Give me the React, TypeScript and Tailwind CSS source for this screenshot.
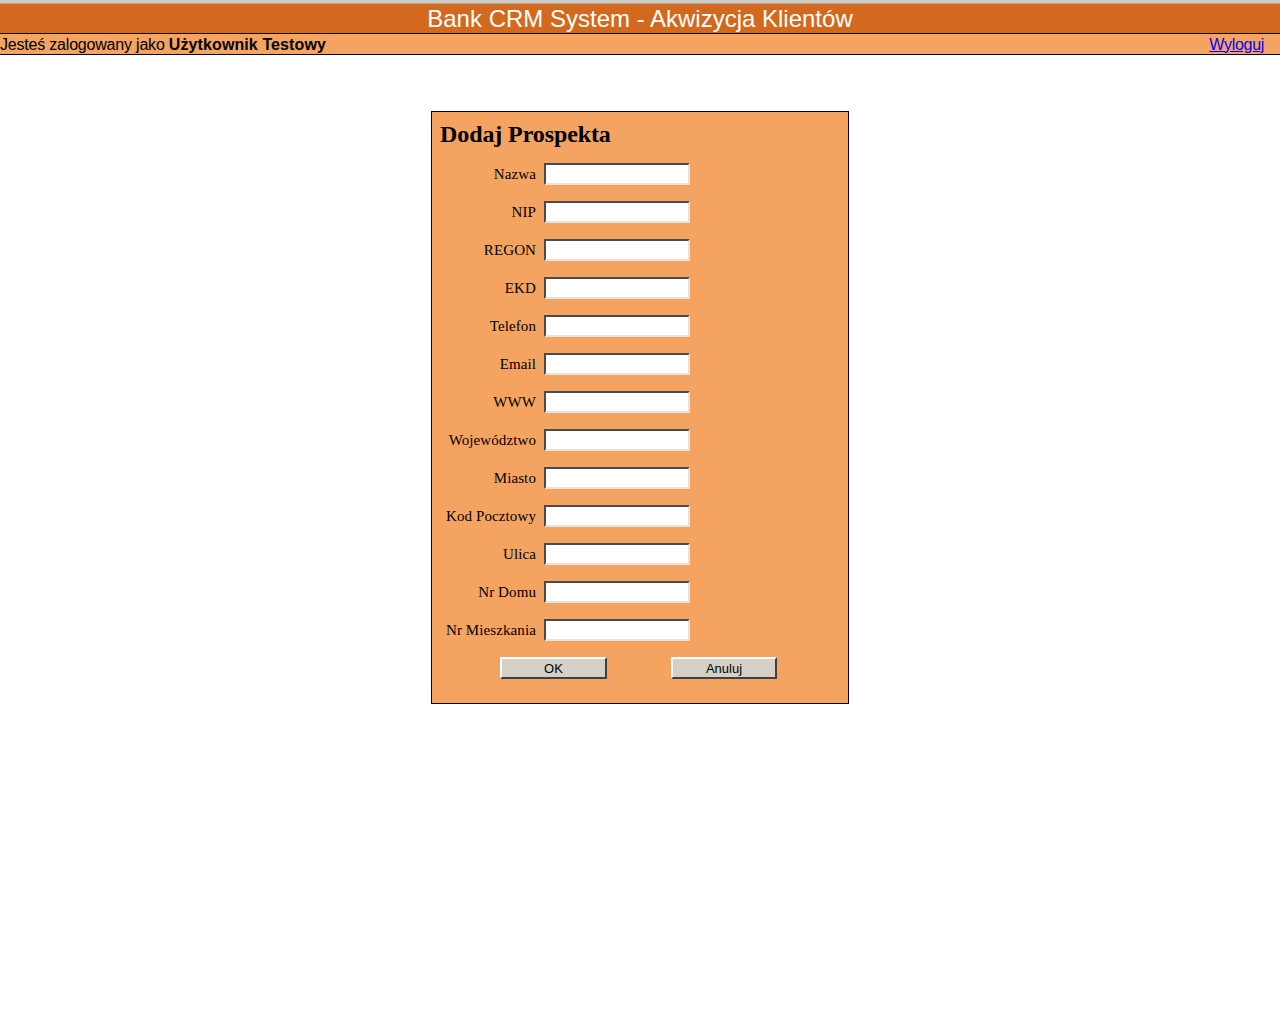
import React from "react";

const fields = [
  "Nazwa",
  "NIP",
  "REGON",
  "EKD",
  "Telefon",
  "Email",
  "WWW",
  "Województwo",
  "Miasto",
  "Kod Pocztowy",
  "Ulica",
  "Nr Domu",
  "Nr Mieszkania",
];

export default function App() {
  return (
    <div className="min-h-[1024px] bg-white" style={{ fontFamily: '"Liberation Sans", Arial, sans-serif' }}>
      <div className="h-[3px] bg-[#d0ccc4]" />
      <div className="h-px bg-[#a8a29a]" />
      <div className="h-[29px] bg-[#d2691e] flex items-center justify-center pt-[1px] text-white text-[24px] leading-none">
        Bank CRM System - Akwizycja Klientów
      </div>
      <div className="h-px bg-black" />
      <div className="h-[20px] bg-[#f4a460] flex items-center justify-between pr-4 pt-[1px] text-[16px] leading-none text-black">
        <span className="tracking-[-0.2px]">
          Jesteś zalogowany jako <b className="tracking-[0.1px]">Użytkownik Testowy</b>
        </span>
        <a href="#" className="text-[#0000ff] underline tracking-[-0.3px]">Wyloguj</a>
      </div>
      <div className="h-px bg-black" />

      <div className="flex justify-center pt-[56px]">
        <div
          className="w-[418px] h-[593px] border border-black bg-[#f4a460] pl-[8px] pt-[8px]"
          style={{ fontFamily: '"Liberation Serif", "Times New Roman", serif' }}
        >
          <h2 className="text-[24px] font-bold leading-[28px] text-black tracking-[-0.1px]">Dodaj Prospekta</h2>
          <div className="mt-[15px] flex flex-col gap-[16px]">
            {fields.map((f) => (
              <div key={f} className="flex items-center h-[22px]">
                <label className="w-[96px] text-right text-[15px] text-black whitespace-nowrap tracking-[0.1px]">{f}</label>
                <input
                  type="text"
                  className="ml-[8px] w-[146px] h-[22px] bg-white border-2 border-t-[#4a4a4a] border-l-[#4a4a4a] border-r-[#e4e2de] border-b-[#e4e2de] outline-none"
                />
              </div>
            ))}
          </div>
          <div className="mt-[16px] flex" style={{ fontFamily: '"Liberation Sans", Arial, sans-serif' }}>
            <button className="ml-[60px] w-[107px] h-[22px] bg-[#d4d0c8] border-2 border-t-white border-l-white border-r-[#404040] border-b-[#404040] text-[13px] text-black leading-none">
              OK
            </button>
            <button className="ml-[64px] w-[106px] h-[22px] bg-[#d4d0c8] border-2 border-t-white border-l-white border-r-[#404040] border-b-[#404040] text-[13px] text-black leading-none">
              Anuluj
            </button>
          </div>
        </div>
      </div>
    </div>
  );
}
